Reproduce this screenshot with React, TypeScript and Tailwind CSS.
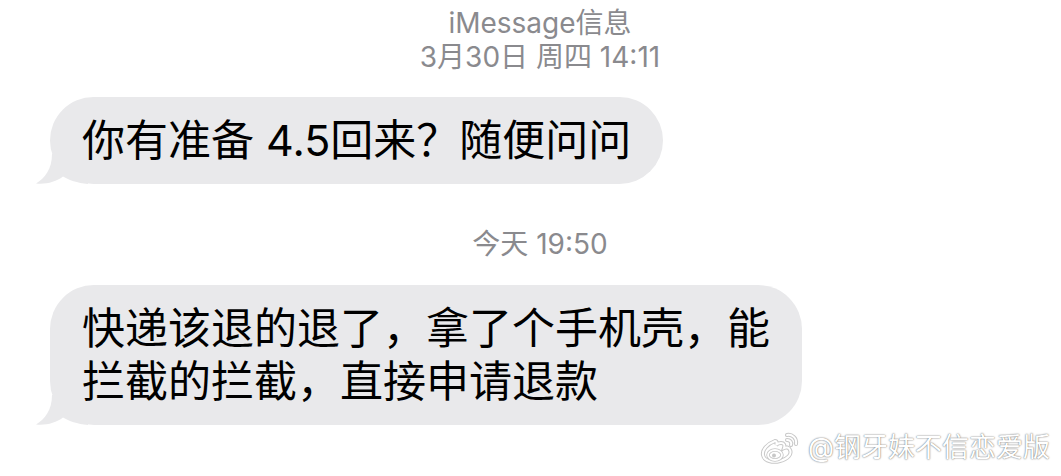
import React from "react";

const FONT = { fontFamily: '"Inter", "Noto Sans CJK SC", sans-serif' };

function Tail() {
  return (
    <svg
      className="absolute left-[-14px] bottom-0"
      width="52"
      height="30"
      viewBox="0 0 52 30"
      aria-hidden
    >
      <path
        d="M16 0 C16 15 9 24 0 29.5 C10 30.5 20 28 27 22.5 C33 26 41 29 52 30 L52 0 Z"
        fill="#e9e9eb"
      />
    </svg>
  );
}

function Bubble({ children }: { children: React.ReactNode }) {
  return (
    <div className="relative w-fit rounded-[44px] bg-[#e9e9eb] px-8 py-[17px] text-[43px] leading-[53px] text-black">
      <Tail />
      <div className="relative">{children}</div>
    </div>
  );
}

function WeiboLogo() {
  return (
    <svg width="40" height="32" viewBox="0 0 40 32" aria-hidden>
      <g fill="none" stroke="#c8c8c8" strokeWidth="4" strokeLinecap="round">
        <path d="M15 9 C7 12 2 18 3 23 C4 29 13 31 20 29 C28 27 32 22 30 18 C29 15 26 15 24 16 C25 13 24 11 21 11 C19 11 17 12 16 13 C17 11 17 9 15 9 Z" />
        <path d="M27 3 C32 2 37 6 36 12" />
        <path d="M27 8 C30 8 32 10 31 13" />
      </g>
      <g fill="none" stroke="#ffffff" strokeWidth="2" strokeLinecap="round">
        <path d="M15 9 C7 12 2 18 3 23 C4 29 13 31 20 29 C28 27 32 22 30 18 C29 15 26 15 24 16 C25 13 24 11 21 11 C19 11 17 12 16 13 C17 11 17 9 15 9 Z" />
        <path d="M27 3 C32 2 37 6 36 12" />
        <path d="M27 8 C30 8 32 10 31 13" />
      </g>
      <ellipse cx="15" cy="23" rx="7" ry="5" fill="none" stroke="#c8c8c8" strokeWidth="3.5" />
      <ellipse cx="15" cy="23" rx="7" ry="5" fill="none" stroke="#ffffff" strokeWidth="1.8" />
      <circle cx="14" cy="23.5" r="2" fill="#c8c8c8" />
    </svg>
  );
}

export default function App() {
  return (
    <div className="relative h-[476px] w-[1061px] overflow-hidden bg-white" style={FONT}>
      <div className="pt-[6px] pl-[19px] text-center text-[28px] leading-[34px] text-[#8a8a8e]">
        <div>iMessage信息</div>
        <div>3月30日 周四 14:11</div>
      </div>
      <div className="mt-[23px] pl-[50px]">
        <Bubble>你有准备 4.5回来？随便问问</Bubble>
      </div>
      <div className="mt-[43px] pl-[19px] text-center text-[28px] leading-[34px] text-[#8a8a8e]">
        今天 19:50
      </div>
      <div className="mt-[24px] pl-[50px]">
        <Bubble>
          快递该退的退了，拿了个手机壳，能
          <br />
          拦截的拦截，直接申请退款
        </Bubble>
      </div>
      <div className="absolute right-[11px] bottom-[12px] flex items-center gap-[8px]">
        <WeiboLogo />
        <span className="text-[27px] leading-[32px] text-white [text-shadow:0_0_2px_rgba(0,0,0,0.45),0_0_1px_rgba(0,0,0,0.4)]">
          @钢牙妹不信恋爱版
        </span>
      </div>
    </div>
  );
}
